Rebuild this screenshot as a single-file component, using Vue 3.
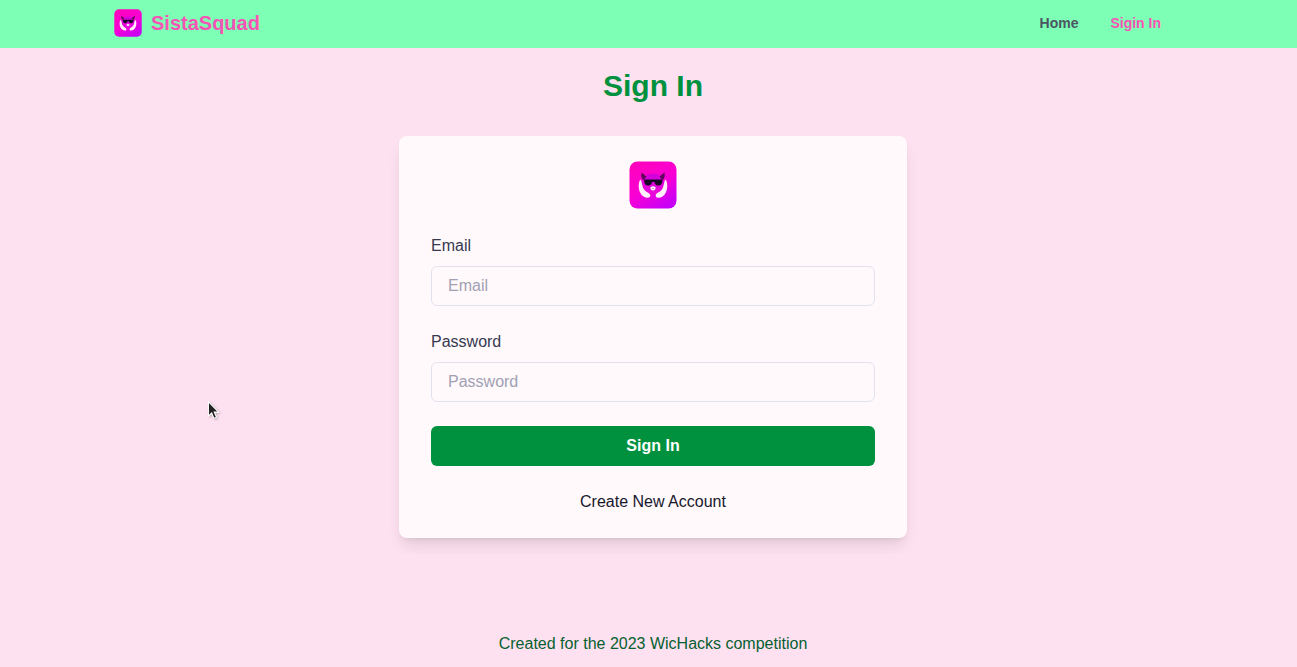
<template>
  <svg class="defs" aria-hidden="true">
    <defs>
      <linearGradient id="logo-bg" x1="0.2" y1="0" x2="0.8" y2="1">
        <stop offset="0" stop-color="#ff03bc" />
        <stop offset="0.5" stop-color="#f900d4" />
        <stop offset="1" stop-color="#c400f8" />
      </linearGradient>
      <linearGradient id="logo-face" x1="0" y1="0" x2="0" y2="1">
        <stop offset="0" stop-color="#cf00dc" />
        <stop offset="1" stop-color="#ee08d8" />
      </linearGradient>
      <symbol id="logo" viewBox="0 0 48 48">
        <rect x="0.5" y="0.5" width="47" height="47" rx="8" fill="url(#logo-bg)" />
        <path d="M14 17Q24 8.500 34 17L35 25Q31 34 24 34Q17 34 13 25Z" fill="url(#logo-face)" />
        <path d="M12.500 11.500L17.500 15.500L14.500 19Q11.500 17 12.500 11.500ZM35.500 11.500L30.500 15.500L33.500 19Q36.500 17 35.500 11.500Z" fill="#5c0758" />
        <path
          d="M11.500 18.500C8.500 22 9 32 14.500 35.500C17.500 37.500 21.500 37 21.300 34.500C21 31.800 18 31.800 15.500 29C12.700 26 13.500 21 11.500 18.500ZM36.500 18.500C39.500 22 39 32 33.500 35.500C30.500 37.500 26.500 37 26.700 34.500C27 31.800 30 31.800 32.500 29C35.300 26 34.500 21 36.500 18.500Z"
          fill="#fff0fb"
        />
        <path d="M15 18.500H33.500L33 22Q32 24.800 29 24.500Q26 24.300 25.500 21H23Q22.500 24.300 19.500 24.500Q16.500 24.800 15.500 22Z" fill="#170625" />
        <path d="M21.300 26.500Q24 24 26.700 26.500Q26.500 29.500 24 29.500Q21.500 29.500 21.300 26.500Z" fill="#fff0fb" />
        <path d="M23 27.200Q24 27.900 25 27.200" fill="none" stroke="#b868b0" stroke-width="0.700" />
      </symbol>
    </defs>
  </svg>

  <div class="page">
    <header class="navbar">
      <a class="brand">
        <svg class="brand-logo"><use href="#logo" /></svg>
        <span>SistaSquad</span>
      </a>
      <nav class="links">
        <a
          v-for="link in links"
          :key="link"
          class="link"
          :class="{ active: link === activeLink }"
        >{{ link }}</a>
      </nav>
    </header>

    <main class="content">
      <h1 class="title">Sign In</h1>
      <form class="card" @submit.prevent>
        <svg class="card-logo"><use href="#logo" /></svg>
        <div v-for="field in fields" :key="field.id" class="field">
          <label :for="field.id">{{ field.label }}</label>
          <input
            :id="field.id"
            v-model="form[field.id]"
            :type="field.id"
            :placeholder="field.label"
          />
        </div>
        <button class="submit" type="submit">Sign In</button>
        <a class="create">Create New Account</a>
      </form>
    </main>

    <footer class="footer">Created for the 2023 WicHacks competition</footer>

    <svg class="cursor" viewBox="0 0 14 22">
      <path d="M1.500 1.500V17L5 13.700L7.500 19.500L10.300 18.300L7.800 12.700H12.500Z" />
    </svg>
  </div>
</template>

<script setup>
import { reactive } from "vue";

const links = ["Home", "Sigin In"];
const activeLink = "Sigin In";

const fields = [
  { id: "email", label: "Email" },
  { id: "password", label: "Password" },
];

const form = reactive({ email: "", password: "" });
</script>

<style>
body {
  background: #fee1f0;
}
</style>

<style scoped>
* {
  box-sizing: border-box;
}

.defs {
  position: absolute;
  width: 0;
  height: 0;
}

.page {
  height: 667px;
  overflow: hidden;
  font-family: "Liberation Sans", Arial, sans-serif;
  font-size: 16px;
  line-height: 24px;
}

.navbar {
  display: flex;
  justify-content: space-between;
  align-items: center;
  height: 48px;
  padding: 0 136px 2px 114px;
  background: #7dffb5;
  font-weight: 700;
}

.brand {
  display: flex;
  align-items: center;
  gap: 9px;
  color: #f653b4;
  font-size: 20px;
}

.brand-logo {
  width: 28px;
  height: 28px;
}

.links {
  display: flex;
  gap: 32px;
  font-size: 14px;
}

.link {
  color: #4b5563;
}

.link.active {
  color: #f653b4;
}

.content {
  display: flex;
  flex-direction: column;
  align-items: center;
  height: 506px;
  padding: 20px 0 0 9px;
  overflow: hidden;
}

.title {
  margin: 0 0 32px;
  color: #00913f;
  font-size: 30px;
  line-height: 36px;
}

.card {
  display: flex;
  flex-direction: column;
  flex-shrink: 0;
  width: 508px;
  height: 402px;
  padding: 25px 32px 24px;
  border-radius: 8px;
  background: #fff9fc;
  box-shadow: 0 10px 15px -3px rgba(0, 0, 0, 0.1),
    0 4px 6px -4px rgba(0, 0, 0, 0.1);
}

.card-logo {
  align-self: center;
  width: 48px;
  height: 48px;
  margin-bottom: 25px;
}

.field {
  display: flex;
  flex-direction: column;
  gap: 8px;
  margin-bottom: 24px;
  color: #36384f;
}

input {
  width: 100%;
  height: 40px;
  padding: 0 16px;
  border: 1px solid #e2e2ef;
  border-radius: 6px;
  outline: none;
  background: transparent;
  font: inherit;
}

input::placeholder {
  color: #a1a0b3;
  opacity: 1;
}

.submit {
  height: 40px;
  border: 0;
  border-radius: 6px;
  background: #00913f;
  color: #fff;
  font: inherit;
  font-weight: 700;
}

.create {
  margin-top: 24px;
  color: #17172c;
  text-align: center;
}

.footer {
  padding: 78px 0 0 9px;
  color: #05602f;
  text-align: center;
}

/* pointer lies over the page */
.cursor {
  position: absolute;
  top: 400px;
  left: 207px;
  width: 13px;
  height: 21px;
  fill: #222;
  stroke: #fff;
  stroke-width: 1.2;
  filter: drop-shadow(1px 1px 1px rgba(0, 0, 0, 0.25));
}
</style>
